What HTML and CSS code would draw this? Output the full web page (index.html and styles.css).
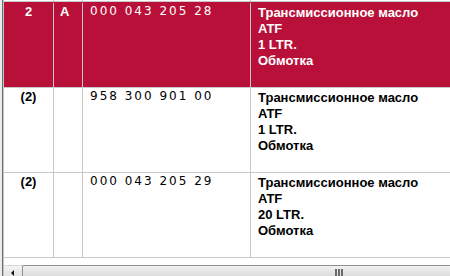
FILE: index.html
```html
<!DOCTYPE html>
<html>
<head>
<meta charset="utf-8">
<link rel="stylesheet" href="styles.css">
</head>
<body>
<div class="window">
  <div class="pane">
    <div class="row stub">
      <div class="cell c1"></div><div class="cell c2"></div><div class="cell c3"></div><div class="cell c4"></div>
    </div>
    <div class="row sel">
      <div class="cell c1">2</div>
      <div class="cell c2">A</div>
      <div class="cell c3">000 043 205 28</div>
      <div class="cell c4">Трансмиссионное масло<br>ATF<br>1 LTR.<br>Обмотка</div>
    </div>
    <div class="row">
      <div class="cell c1 reg">(2)</div>
      <div class="cell c2"></div>
      <div class="cell c3">958 300 901 00</div>
      <div class="cell c4">Трансмиссионное масло<br>ATF<br>1 LTR.<br>Обмотка</div>
    </div>
    <div class="row">
      <div class="cell c1 reg">(2)</div>
      <div class="cell c2"></div>
      <div class="cell c3">000 043 205 29</div>
      <div class="cell c4">Трансмиссионное масло<br>ATF<br>20 LTR.<br>Обмотка</div>
    </div>
    <div class="hscroll">
      <div class="sbtn"><span class="arrow"></span></div>
      <div class="thumb"><span class="grip"></span><span class="grip"></span><span class="grip"></span></div>
    </div>
  </div>
</div>
</body>
</html>
```

FILE: styles.css
```css
html, body {
  margin: 0;
  padding: 0;
  background: #ffffff;
  overflow: hidden;
}
.window {
  width: 450px;
  height: 276px;
  box-sizing: border-box;
  padding-left: 2px;
  background: #ececec;
  overflow: hidden;
}
.pane {
  height: 100%;
  border-left: 1px solid #6e6e6e;
  padding-left: 1px;
  background: #ffffff;
  box-shadow: inset 1px 0 0 #c4c4c4;
  display: flex;
  flex-direction: column;
}
.row {
  display: grid;
  grid-template-columns: 50px 29px 168px 1fr;
  box-sizing: border-box;
  height: 85px;
  border-bottom: 1px solid #c8c8c8;
  background: #ffffff;
  color: #000;
  flex: none;
}
.row.stub {
  height: 2px;
}
.row.sel {
  height: 86px;
  padding-top: 1px;
  background: #b91039;
  color: #ffffff;
}
.cell {
  box-sizing: border-box;
  border-right: 1px solid #c8c8c8;
  line-height: 16px;
  white-space: nowrap;
  overflow: hidden;
}
.c1 {
  text-align: center;
  font: bold 13px/16px "Liberation Sans", Arial, sans-serif;
  padding-top: 1px;
}
.c2 {
  font: bold 13px/16px "Liberation Sans", Arial, sans-serif;
  padding: 1px 0 0 6px;
}
.c3 {
  font: 12px/16px "DejaVu Sans", Verdana, sans-serif;
  letter-spacing: 2px;
  padding-left: 7px;
}
.c4 {
  border-right: none;
  font: bold 13px/16px "Liberation Sans", Arial, sans-serif;
  padding: 2px 0 0 7px;
}
.hscroll {
  margin-top: 7px;
  height: 11px;
  display: flex;
  flex: none;
}
.sbtn {
  width: 18px;
  background: linear-gradient(#f4f4f4, #e2e2e2);
  border-top: 1px solid #d8d8d8;
  display: flex;
  align-items: center;
  justify-content: center;
  padding-top: 3px;
  box-sizing: border-box;
}
.arrow {
  width: 0;
  height: 0;
  border-right: 3px solid #111;
  border-top: 3px solid transparent;
  border-bottom: 3px solid transparent;
  margin-left: -2px;
}
.thumb {
  flex: 1;
  border-top: 1px solid #8f8f8f;
  border-left: 1px solid #8f8f8f;
  border-radius: 2px 0 0 0;
  background: linear-gradient(#f2f2f2, #dcdcdc);
  padding: 3px 0 0 312px;
  display: flex;
  gap: 1px;
}
.grip {
  width: 2px;
  height: 8px;
  background: #6a6a6a;
}
```
